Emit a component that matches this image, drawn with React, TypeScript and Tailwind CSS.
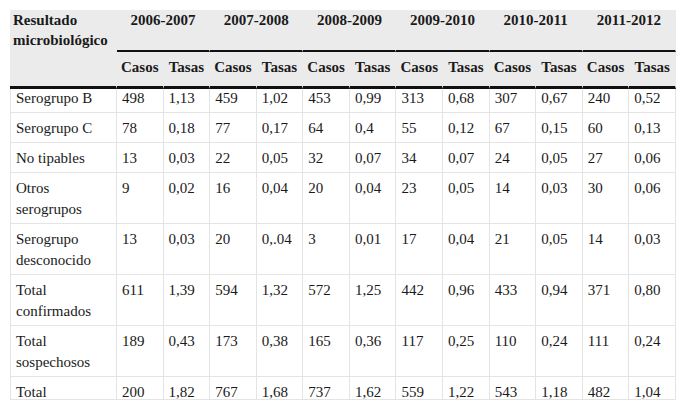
const years = ["2006-2007", "2007-2008", "2008-2009", "2009-2010", "2010-2011", "2011-2012"];

const rows: string[][] = [
  ["Serogrupo B", "498", "1,13", "459", "1,02", "453", "0,99", "313", "0,68", "307", "0,67", "240", "0,52"],
  ["Serogrupo C", "78", "0,18", "77", "0,17", "64", "0,4", "55", "0,12", "67", "0,15", "60", "0,13"],
  ["No tipables", "13", "0,03", "22", "0,05", "32", "0,07", "34", "0,07", "24", "0,05", "27", "0,06"],
  ["Otros serogrupos", "9", "0,02", "16", "0,04", "20", "0,04", "23", "0,05", "14", "0,03", "30", "0,06"],
  ["Serogrupo desconocido", "13", "0,03", "20", "0,.04", "3", "0,01", "17", "0,04", "21", "0,05", "14", "0,03"],
  ["Total confirmados", "611", "1,39", "594", "1,32", "572", "1,25", "442", "0,96", "433", "0,94", "371", "0,80"],
  ["Total sospechosos", "189", "0,43", "173", "0,38", "165", "0,36", "117", "0,25", "110", "0,24", "111", "0,24"],
  ["Total", "200", "1,82", "767", "1,68", "737", "1,62", "559", "1,22", "543", "1,18", "482", "1,04"],
];

export default function App() {
  return (
    <div className="min-h-[411px] bg-white pt-[10px] pl-[10px] font-['Liberation_Serif','Times_New_Roman',serif]">
      <div className="w-[666px] h-[390px] overflow-hidden border-b border-[#e4e4e4]">
        <table className="w-[666px] table-fixed border-separate border-spacing-0 text-[15px] text-[#1a1a1a] font-['Liberation_Serif','Times_New_Roman',serif]">
          <colgroup>
            <col className="w-[107px]" />
            {Array.from({ length: 12 }).map((_, i) => (
              <col key={i} />
            ))}
          </colgroup>
          <thead className="bg-[#ebebeb]">
            <tr>
              <th className="text-left align-top font-bold leading-[20px] pl-[3px] pt-0 border-r border-[#ebebeb]">
                Resultado microbiológico
              </th>
              {years.map((y) => (
                <th
                  key={y}
                  colSpan={2}
                  className="text-center align-top font-bold leading-[20px] pt-0 pb-[20px] border-r border-r-[#ebebeb] border-b-2 border-b-[#111]"
                >
                  {y}
                </th>
              ))}
            </tr>
            <tr>
              <th className="border-r border-r-[#ebebeb] border-b-[3px] border-b-[#111]"></th>
              {years.flatMap((y) => [
                <th key={y + "c"} className="text-center align-top font-bold leading-[20px] pt-[5px] pb-[9px] border-r border-r-[#ebebeb] border-b-[3px] border-b-[#111]">
                  Casos
                </th>,
                <th key={y + "t"} className="text-center align-top font-bold leading-[20px] pt-[5px] pb-[9px] border-r border-r-[#ebebeb] border-b-[3px] border-b-[#111]">
                  Tasas
                </th>,
              ])}
            </tr>
          </thead>
          <tbody>
            {rows.map((r, ri) => (
              <tr key={r[0]}>
                {r.map((c, i) => (
                  <td
                    key={i}
                    className={`align-top pl-[5px] border-b border-r border-[#e4e4e4] ${
                      ri === 0 ? "leading-[19px] pt-0 pb-[4px]" : "leading-[21px] pt-[5px] pb-[3px]"
                    } ${i === 0 ? "border-l pr-[4px]" : ""}`}
                  >
                    {c}
                  </td>
                ))}
              </tr>
            ))}
          </tbody>
        </table>
      </div>
    </div>
  );
}
